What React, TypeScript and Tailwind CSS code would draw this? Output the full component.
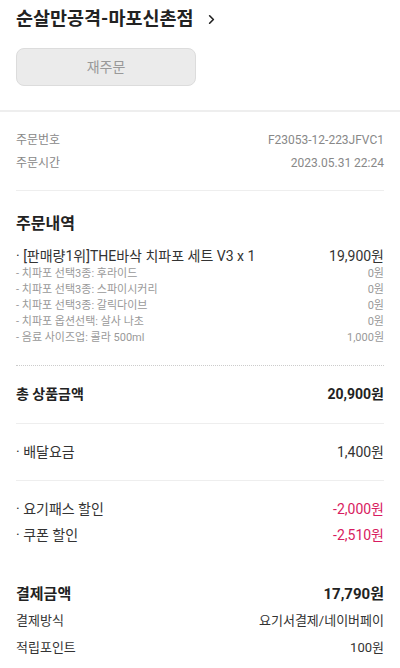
import { ChevronRight } from 'lucide-react'

const options = [
  { name: '- 치파포 선택3종: 후라이드', price: '0원' },
  { name: '- 치파포 선택3종: 스파이시커리', price: '0원' },
  { name: '- 치파포 선택3종: 갈릭다이브', price: '0원' },
  { name: '- 치파포 옵션선택: 살사 나초', price: '0원' },
  { name: '- 음료 사이즈업: 콜라 500ml', price: '1,000원' },
]

function Row({ label, value, className }: { label: string; value: string; className?: string }) {
  return (
    <div className={`flex justify-between items-center ${className ?? ''}`}>
      <span>{label}</span>
      <span>{value}</span>
    </div>
  )
}

export default function App() {
  return (
    <div
      className="w-[400px] h-[668px] overflow-hidden bg-white text-[#333]"
      style={{ fontFamily: "Roboto, 'Noto Sans CJK KR', sans-serif" }}
    >
      <div className="px-4 pt-[6px]">
        <div className="flex items-center gap-[10px] h-[26px]">
          <h1 className="text-[18.5px] font-bold leading-[26px] text-[#222]">순살만공격-마포신촌점</h1>
          <ChevronRight size={15} strokeWidth={2.6} className="text-[#222]" />
        </div>
        <button className="mt-4 w-[180px] h-[38px] rounded-lg bg-[#ebebeb] border border-[#dcdcdc] text-[14px] text-[#999]">
          재주문
        </button>
      </div>

      <div className="mt-6 h-[2px] bg-[#eeeeee]" />

      <div className="px-4">
        <div className="pt-[19px] pb-[18px] text-[12px] leading-[18px] text-[#888] flex flex-col gap-[5px]">
          <Row label="주문번호" value="F23053-12-223JFVC1" />
          <Row label="주문시간" value="2023.05.31 22:24" />
        </div>
        <div className="h-px bg-[#eeeeee]" />

        <h2 className="mt-[22px] text-[16px] font-bold leading-[22px] text-[#222]">주문내역</h2>
        <div className="mt-[11px] flex justify-between text-[14px] leading-5 text-[#333]">
          <span>· [판매량1위]THE바삭 치파포 세트 V3 x 1</span>
          <span>19,900원</span>
        </div>
        <div className="text-[11px] leading-4 text-[#999]">
          {options.map((o) => (
            <Row key={o.name} label={o.name} value={o.price} />
          ))}
        </div>

        <div className="mt-[19px] border-t border-dotted border-[#cccccc]" />

        <Row
          label="총 상품금액"
          value="20,900원"
          className="mt-[18px] text-[14px] font-bold leading-5 text-[#222]"
        />
        <div className="mt-[19px] h-px bg-[#eeeeee]" />

        <Row label="· 배달요금" value="1,400원" className="mt-[18px] text-[14px] leading-5" />
        <div className="mt-[18px] h-px bg-[#eeeeee]" />

        <div className="mt-[18px] flex flex-col gap-[6px] text-[14px] leading-5">
          <div className="flex justify-between">
            <span>· 요기패스 할인</span>
            <span className="text-[#d81b60]">-2,000원</span>
          </div>
          <div className="flex justify-between">
            <span>· 쿠폰 할인</span>
            <span className="text-[#d81b60]">-2,510원</span>
          </div>
        </div>

        <Row
          label="결제금액"
          value="17,790원"
          className="mt-[38px] text-[15px] font-bold leading-[22px] text-[#222]"
        />
        <div className="mt-[6px] flex flex-col gap-[7px] text-[13px] leading-5">
          <Row label="결제방식" value="요기서결제/네이버페이" />
          <Row label="적립포인트" value="100원" />
        </div>
      </div>
    </div>
  )
}
